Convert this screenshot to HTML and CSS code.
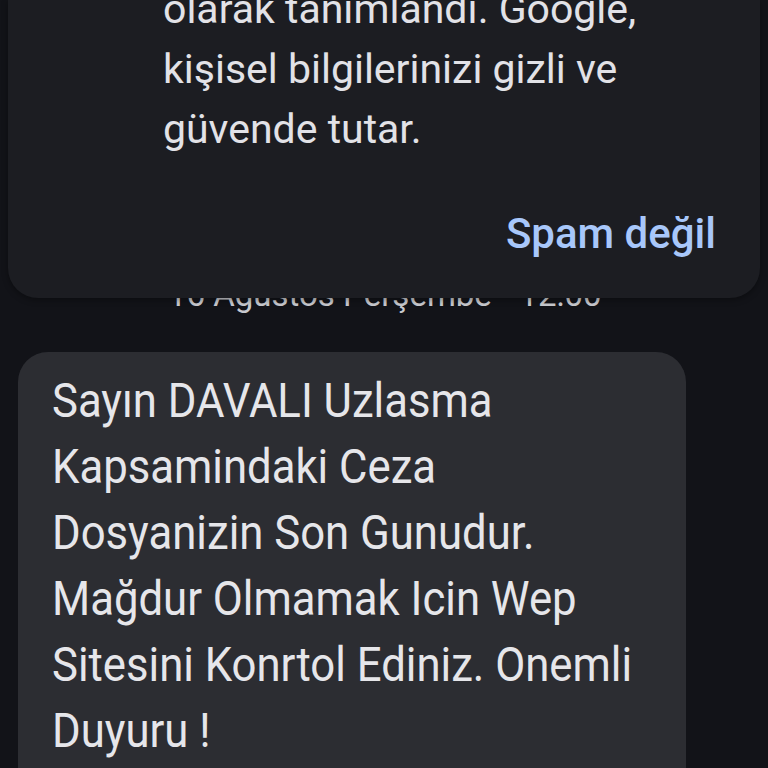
FILE: index.html
```html
<!DOCTYPE html>
<html lang="tr">
<head>
<meta charset="utf-8">
<link rel="stylesheet" href="styles.css">
</head>
<body>
<div class="screen">
  <section class="spam-card">
    <p class="spam-text">
      <span class="line">olarak tanımlandı. Google,</span>
      <span class="line">kişisel bilgilerinizi gizli ve</span>
      <span class="line">güvende tutar.</span>
    </p>
    <div class="spam-actions">
      <button class="not-spam">Spam değil</button>
    </div>
  </section>
  <div class="date-row">16 Ağustos Perşembe • 12:00</div>
  <div class="bubble">
    <p class="bubble-text">
      <span class="line">Sayın DAVALI Uzlasma</span>
      <span class="line">Kapsamindaki Ceza</span>
      <span class="line">Dosyanizin Son Gunudur.</span>
      <span class="line">Mağdur Olmamak Icin Wep</span>
      <span class="line">Sitesini Konrtol Ediniz. Onemli</span>
      <span class="line">Duyuru !</span>
    </p>
  </div>
</div>
</body>
</html>
```
FILE: styles.css
```css
* { box-sizing: border-box; }
html, body {
  margin: 0;
  padding: 0;
  background: #121318;
}
body {
  width: 768px;
  height: 768px;
  overflow: hidden;
  font-family: Roboto, "Noto Sans", sans-serif;
}
.screen {
  display: flex;
  flex-direction: column;
}
.spam-card {
  position: relative;
  z-index: 1;
  margin: 0 8px;
  background: #1c1d22;
  border-radius: 0 0 30px 30px;
  padding: 0 44px 34px 155px;
  box-shadow: 0 2px 6px rgba(0,0,0,0.35);
}
.spam-text {
  margin: -21px 0 0;
  font-size: 41px;
  line-height: 60px;
  color: #e2e2e7;
}
.line {
  display: block;
  white-space: nowrap;
}
.spam-actions {
  display: flex;
  justify-content: flex-end;
  margin-top: 45px;
}
.not-spam {
  background: none;
  border: 0;
  padding: 0;
  font-family: inherit;
  font-size: 42px;
  font-weight: 500;
  line-height: 60px;
  color: #a8c7fa;
}
.date-row {
  margin-top: -23px;
  padding-left: 168px;
  font-size: 33px;
  line-height: 40px;
  color: #c8c9ce;
}
.bubble {
  margin: 37px 0 0 18px;
  width: 668px;
  background: #2c2d32;
  border-radius: 30px;
  padding: 16px 20px 40px 34px;
}
.bubble-text {
  margin: 0;
  font-size: 48px;
  line-height: 66px;
  color: #e6e6ea;
  transform: scaleX(0.91);
  transform-origin: left center;
}
```
